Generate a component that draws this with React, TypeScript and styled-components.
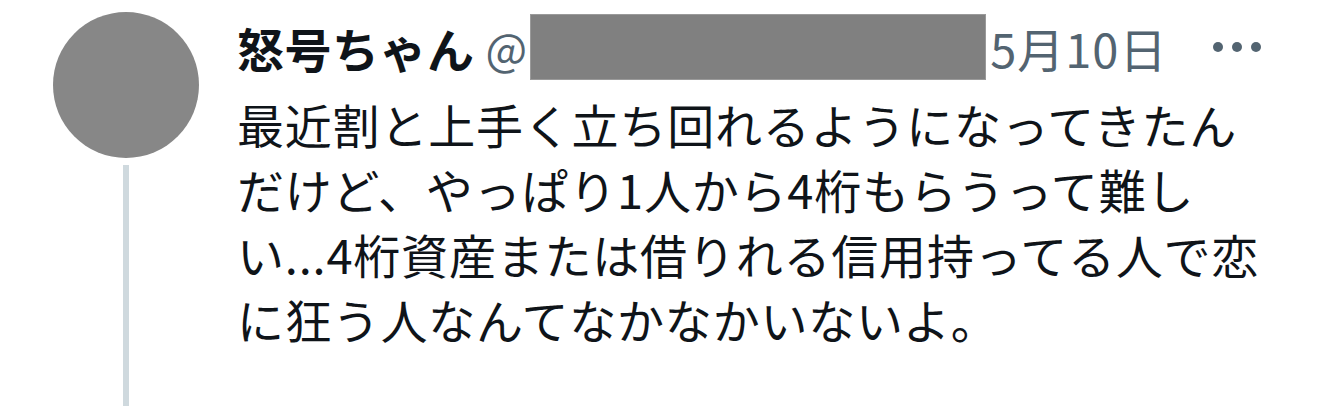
import React from "react";
import styled, { createGlobalStyle } from "styled-components";

const Global = createGlobalStyle`
  html, body { margin: 0; padding: 0; background: #ffffff; }
  body {
    font-family: "Noto Sans CJK JP", "Noto Sans", sans-serif;
    color: #0f1419;
  }
`;

const Tweet = styled.article`
  display: flex;
  width: 1328px;
  height: 406px;
  box-sizing: border-box;
  padding: 12px 0 0 52px;
  overflow: hidden;
`;

const AvatarColumn = styled.div`
  display: flex;
  flex-direction: column;
  align-items: center;
  width: 148px;
  flex-shrink: 0;
`;

const Avatar = styled.div`
  width: 146px;
  height: 146px;
  border-radius: 50%;
  background: #878787;
`;

const ThreadLine = styled.div`
  width: 6px;
  flex: 1;
  margin-top: 7px;
  background: #cfd9de;
`;

const Content = styled.div`
  display: flex;
  flex-direction: column;
  margin-left: 37px;
  flex: 1;
  min-width: 0;
`;

const Header = styled.header`
  display: flex;
  align-items: center;
  height: 66px;
  margin-top: 2px;
  white-space: nowrap;
`;

const Name = styled.span`
  font-size: 47px;
  font-weight: 700;
  letter-spacing: 0.5px;
  color: #0f1419;
  line-height: 1;
`;

const Handle = styled.span`
  font-size: 44px;
  color: #536471;
  margin-left: 11px;
  line-height: 1;
`;

const Redaction = styled.span`
  display: inline-block;
  width: 456px;
  height: 66px;
  margin-left: 3px;
  background: #808080;
  box-shadow: inset 0 0 0 1px #9a9a9a;
`;

const DateText = styled.span`
  font-size: 47px;
  letter-spacing: 1px;
  color: #536471;
  margin-left: 4px;
  line-height: 1;
`;

const More = styled.span`
  display: flex;
  gap: 9px;
  margin-left: 46px;
`;

const Dot = styled.span`
  width: 10px;
  height: 10px;
  border-radius: 50%;
  background: #536471;
`;

const Body = styled.div`
  margin-top: 11px;
  font-size: 47px;
  letter-spacing: 0.8px;
  line-height: 65px;
  color: #0f1419;
`;

const Line = styled.div`
  white-space: nowrap;
`;

const lines = [
  "最近割と上手く立ち回れるようになってきたん",
  "だけど、やっぱり1人から4桁もらうって難し",
  "い...4桁資産または借りれる信用持ってる人で恋",
  "に狂う人なんてなかなかいないよ。",
];

export default function App() {
  return (
    <>
      <Global />
      <Tweet>
        <AvatarColumn>
          <Avatar />
          <ThreadLine />
        </AvatarColumn>
        <Content>
          <Header>
            <Name>怒号ちゃん</Name>
            <Handle>@</Handle>
            <Redaction />
            <DateText>5月10日</DateText>
            <More aria-label="more">
              <Dot />
              <Dot />
              <Dot />
            </More>
          </Header>
          <Body>
            {lines.map((l) => (
              <Line key={l}>{l}</Line>
            ))}
          </Body>
        </Content>
      </Tweet>
    </>
  );
}
